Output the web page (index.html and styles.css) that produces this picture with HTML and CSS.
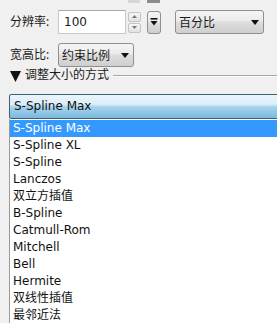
FILE: index.html
```html
<!DOCTYPE html>
<html lang="zh">
<head>
<meta charset="utf-8">
<link rel="stylesheet" href="styles.css">
</head>
<body>
<div class="panel">
  <div class="stubs">
    <span class="stub stub-spin"></span>
    <span class="stub stub-btn"></span>
  </div>
  <div class="row row-res">
    <span class="label">分辨率:</span>
    <div class="input">100</div>
    <div class="spinner">
      <span class="spin spin-up"><svg width="5" height="3" viewBox="0 0 5 3"><path d="M0 3 L2.5 0 L5 3 Z" fill="#6e7a86"/></svg></span>
      <span class="spin spin-down"><svg width="5" height="3" viewBox="0 0 5 3"><path d="M0 0 L5 0 L2.5 3 Z" fill="#6e7a86"/></svg></span>
    </div>
    <div class="iconbtn"><svg width="8" height="8" viewBox="0 0 8 8"><rect x="0.5" y="0" width="7" height="1.6" fill="#111"/><path d="M0.5 3 L7.5 3 L4 7.5 Z" fill="#111"/></svg></div>
    <div class="select select-unit"><span>百分比</span><svg class="caret" width="8" height="5" viewBox="0 0 8 5"><path d="M0 0 L8 0 L4 5 Z" fill="#111"/></svg></div>
  </div>
  <div class="row row-ratio">
    <span class="label">宽高比:</span>
    <div class="select select-ratio"><span>约束比例</span><svg class="caret" width="8" height="5" viewBox="0 0 8 5"><path d="M0 0 L8 0 L4 5 Z" fill="#111"/></svg></div>
  </div>
  <div class="section">
    <svg class="tri" width="11" height="11" viewBox="0 0 11 11"><path d="M0 0 L11 0 L5.5 11 Z" fill="#111"/></svg>
    <span class="section-title">调整大小的方式</span>
    <span class="rule"></span>
  </div>
  <div class="combo">S-Spline Max</div>
  <ul class="list">
    <li class="selected">S-Spline Max</li>
    <li>S-Spline XL</li>
    <li>S-Spline</li>
    <li>Lanczos</li>
    <li>双立方插值</li>
    <li>B-Spline</li>
    <li>Catmull-Rom</li>
    <li>Mitchell</li>
    <li>Bell</li>
    <li>Hermite</li>
    <li>双线性插值</li>
    <li>最邻近法</li>
  </ul>
</div>
</body>
</html>
```

FILE: styles.css
```css
html, body {
  margin: 0;
  padding: 0;
}
body {
  background: #f0f0f0;
  width: 277px;
  height: 323px;
  overflow: hidden;
  font-family: "Noto Sans", "Noto Sans CJK SC", sans-serif;
  font-size: 12px;
  color: #1a1a1a;
}
.panel {
  width: 277px;
  height: 323px;
  overflow: hidden;
}
.stubs {
  height: 3px;
  display: flex;
}
.stub {
  display: block;
  height: 3px;
}
.stub-spin {
  margin-left: 128px;
  width: 12px;
  background: #d6d6d6;
}
.stub-btn {
  margin-left: 7px;
  width: 13px;
  background: #8c8c8c;
}
.row {
  display: flex;
  align-items: center;
  padding-left: 10px;
}
.row-res {
  margin-top: 7px;
  height: 24px;
}
.row-ratio {
  margin-top: 9px;
  height: 24px;
}
.label {
  width: 48px;
  line-height: 16px;
}
.input {
  box-sizing: border-box;
  width: 68px;
  height: 24px;
  background: #fff;
  border: 1px solid #c5c8cc;
  border-top-color: #a5a8ad;
  padding-left: 5px;
  font-family: "DejaVu Sans", "Noto Sans CJK SC", sans-serif;
  font-size: 12px;
  line-height: 22px;
}
.spinner {
  margin-left: 2px;
  width: 13px;
  height: 21px;
  display: flex;
  flex-direction: column;
  gap: 1px;
}
.spin {
  flex: 1;
  box-sizing: border-box;
  border: 1px solid #c4c4c4;
  border-radius: 2px;
  background: linear-gradient(#f6f6f6, #e2e2e2);
  display: flex;
  align-items: center;
  justify-content: center;
}
.iconbtn {
  box-sizing: border-box;
  margin-left: 6px;
  width: 14px;
  height: 23px;
  border: 1px solid #8e8f8f;
  border-radius: 3px;
  background: linear-gradient(#f4f4f4 0%, #ebebeb 45%, #dddddd 50%, #cfcfcf 100%);
  display: flex;
  align-items: center;
  justify-content: center;
}
.select {
  box-sizing: border-box;
  height: 24px;
  border: 1px solid #8e8f8f;
  border-radius: 3px;
  background: linear-gradient(#f5f5f5 0%, #ebebeb 45%, #dddddd 50%, #cfcfcf 100%);
  display: flex;
  align-items: center;
  justify-content: space-between;
  padding: 0 4px 0 3px;
  font-size: 12px;
}
.select-unit {
  margin-left: 14px;
  width: 89px;
}
.select-ratio {
  width: 76px;
}
.section {
  display: flex;
  align-items: center;
  height: 16px;
  padding-left: 10px;
}
.tri {
  display: block;
  margin-top: 2px;
}
.section-title {
  margin-left: 4px;
  line-height: 16px;
}
.rule {
  flex: 1;
  margin-left: 4px;
  margin-top: 2px;
  height: 1px;
  background: #a8a8a8;
  border-bottom: 1px solid #fbfbfb;
}
.combo {
  box-sizing: border-box;
  margin-top: 11px;
  margin-left: 9px;
  width: 300px;
  height: 25px;
  border: 1px solid #3c5f7a;
  border-radius: 2px;
  background: linear-gradient(#eaf5fb 0%, #dbeef9 40%, #a8d2ec 52%, #7ab9df 100%);
  padding-left: 4px;
  line-height: 23px;
  font-family: "DejaVu Sans", "Noto Sans CJK SC", sans-serif;
  font-size: 12px;
  color: #111;
}
.list {
  list-style: none;
  margin: 0 0 0 9px;
  padding: 1px 0 0 0;
  width: 300px;
  height: 220px;
  background: #fff;
  border-left: 1px solid #9a9a9a;
}
.list li {
  height: 17px;
  line-height: 17px;
  padding-left: 3px;
  font-family: "DejaVu Sans", "Noto Sans CJK SC", sans-serif;
  font-size: 12px;
  color: #111;
}
.list li.selected {
  background: #3399ff;
  color: #fff;
}
```
